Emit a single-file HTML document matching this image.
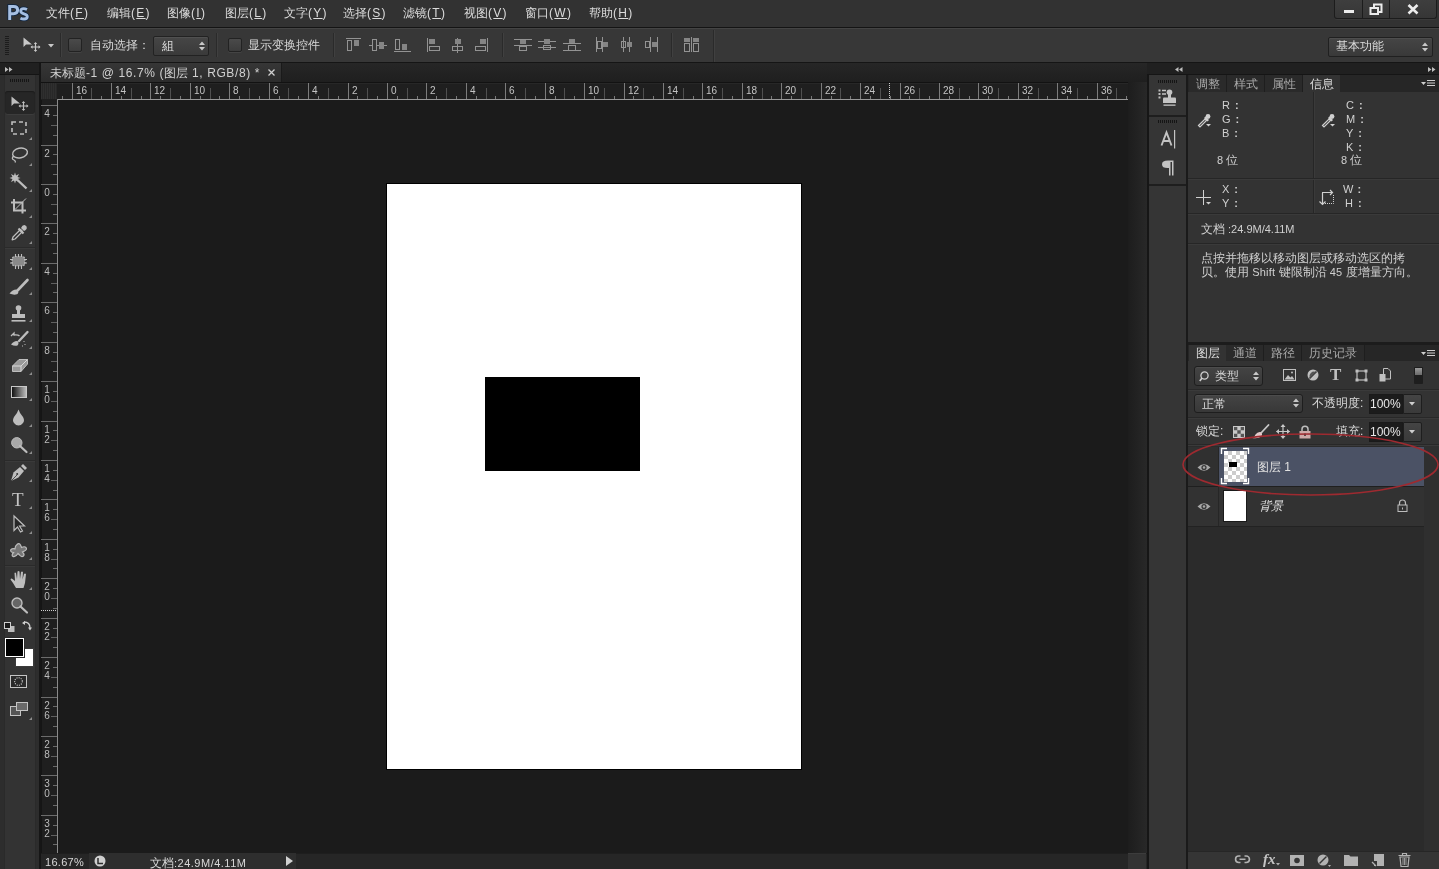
<!DOCTYPE html><html><head><meta charset="utf-8"><style>
*{margin:0;padding:0;box-sizing:border-box}
html,body{width:1439px;height:869px;overflow:hidden;background:#1b1b1b}
body{position:relative;font-family:"Liberation Sans",sans-serif;font-size:12px;color:#d6d6d6}
.t{position:absolute;white-space:nowrap;line-height:1;will-change:transform}
svg{position:absolute;overflow:visible}
u{text-decoration:underline;text-underline-offset:1px}
</style></head><body><div style="position:absolute;left:0px;top:0px;width:1439px;height:28px;background:#323232"></div>
<div style="position:absolute;left:0px;top:27px;width:1439px;height:1px;background:#141414"></div>
<svg style="left:0;top:0" width="36" height="27"><path d="M9.7 20 V6.5 H13.6 Q17.6 6.5 17.6 10.1 Q17.6 13.7 13.6 13.7 H10" fill="none" stroke="#0c2340" stroke-width="4.6"/><path d="M27 9.6 Q25.3 8.7 23.7 8.7 Q20.7 8.7 20.7 11.1 Q20.7 13 24 13.8 Q27.3 14.6 27.3 16.8 Q27.3 19 24 19 Q22 19 20.4 18.2" fill="none" stroke="#0c2340" stroke-width="4.4"/><path d="M9.7 20 V6.5 H13.6 Q17.6 6.5 17.6 10.1 Q17.6 13.7 13.6 13.7 H10" fill="none" stroke="#a6bfe2" stroke-width="3"/><path d="M27 9.6 Q25.3 8.7 23.7 8.7 Q20.7 8.7 20.7 11.1 Q20.7 13 24 13.8 Q27.3 14.6 27.3 16.8 Q27.3 19 24 19 Q22 19 20.4 18.2" fill="none" stroke="#a6bfe2" stroke-width="2.8"/></svg>
<div class="t" style="left:46px;top:7px;font-size:12px;color:#dcdcdc">文件<span style="letter-spacing:1.3px">(<u>F</u>)</span></div>
<div class="t" style="left:107px;top:7px;font-size:12px;color:#dcdcdc">编辑<span style="letter-spacing:1.3px">(<u>E</u>)</span></div>
<div class="t" style="left:167px;top:7px;font-size:12px;color:#dcdcdc">图像<span style="letter-spacing:1.3px">(<u>I</u>)</span></div>
<div class="t" style="left:225px;top:7px;font-size:12px;color:#dcdcdc">图层<span style="letter-spacing:1.3px">(<u>L</u>)</span></div>
<div class="t" style="left:284px;top:7px;font-size:12px;color:#dcdcdc">文字<span style="letter-spacing:1.3px">(<u>Y</u>)</span></div>
<div class="t" style="left:343px;top:7px;font-size:12px;color:#dcdcdc">选择<span style="letter-spacing:1.3px">(<u>S</u>)</span></div>
<div class="t" style="left:403px;top:7px;font-size:12px;color:#dcdcdc">滤镜<span style="letter-spacing:1.3px">(<u>T</u>)</span></div>
<div class="t" style="left:464px;top:7px;font-size:12px;color:#dcdcdc">视图<span style="letter-spacing:1.3px">(<u>V</u>)</span></div>
<div class="t" style="left:525px;top:7px;font-size:12px;color:#dcdcdc">窗口<span style="letter-spacing:1.3px">(<u>W</u>)</span></div>
<div class="t" style="left:589px;top:7px;font-size:12px;color:#dcdcdc">帮助<span style="letter-spacing:1.3px">(<u>H</u>)</span></div>
<div style="position:absolute;left:1334px;top:0px;width:103px;height:19px;background:linear-gradient(#3e3e3e,#363636);border:1px solid #1c1c1c;border-top:none;border-radius:0 0 3px 3px;box-shadow:0 1px 0 #3a3a3a"></div>
<div style="position:absolute;left:1362px;top:0px;width:1px;height:18px;background:#1c1c1c"></div>
<div style="position:absolute;left:1389px;top:0px;width:1px;height:18px;background:#1c1c1c"></div>
<div style="position:absolute;left:1344px;top:10px;width:10px;height:3px;background:#ececec"></div>
<svg style="left:1369px;top:3px" width="15" height="12"><rect x="5" y="1.5" width="7.5" height="7.5" fill="none" stroke="#ececec" stroke-width="2"/><rect x="1.5" y="5" width="7.5" height="6" fill="#383838" stroke="#ececec" stroke-width="2"/></svg>
<svg style="left:1407px;top:4px" width="12" height="11"><path d="M1.5 1 L10.5 9.5 M10.5 1 L1.5 9.5" stroke="#ececec" stroke-width="2.6"/></svg>
<div style="position:absolute;left:0px;top:28px;width:1439px;height:34px;background:#373737;border-top:1px solid #444"></div>
<div style="position:absolute;left:0px;top:62px;width:1439px;height:1px;background:#151515"></div>
<div style="position:absolute;left:5px;top:36px;width:4px;height:1px;background:#1c1c1c"></div>
<div style="position:absolute;left:5px;top:38px;width:4px;height:1px;background:#1c1c1c"></div>
<div style="position:absolute;left:5px;top:40px;width:4px;height:1px;background:#1c1c1c"></div>
<div style="position:absolute;left:5px;top:42px;width:4px;height:1px;background:#1c1c1c"></div>
<div style="position:absolute;left:5px;top:44px;width:4px;height:1px;background:#1c1c1c"></div>
<div style="position:absolute;left:5px;top:46px;width:4px;height:1px;background:#1c1c1c"></div>
<div style="position:absolute;left:5px;top:48px;width:4px;height:1px;background:#1c1c1c"></div>
<div style="position:absolute;left:5px;top:50px;width:4px;height:1px;background:#1c1c1c"></div>
<div style="position:absolute;left:5px;top:52px;width:4px;height:1px;background:#1c1c1c"></div>
<div style="position:absolute;left:5px;top:54px;width:4px;height:1px;background:#1c1c1c"></div>
<svg style="left:23px;top:37px" width="18" height="15" viewBox="0 0 18 15"><path d="M0.5 0.5 L0.5 10 L3 7.5 L9 7.5 Z" fill="#c8c8c8"/><path d="M12.5 6 V14 M8.5 10 H16.5" stroke="#c8c8c8" stroke-width="1.2"/><path d="M12.5 5 L10.8 7 H14.2 Z M12.5 15 L10.8 13 H14.2 Z M7.5 10 L9.5 8.3 V11.7 Z M17.5 10 L15.5 8.3 V11.7 Z" fill="#c8c8c8"/></svg>
<svg style="left:48px;top:44px" width="6" height="4"><path d="M0 0 H6 L3 3.5 Z" fill="#c8c8c8"/></svg>
<div style="position:absolute;left:60px;top:33px;width:1px;height:24px;background:#2a2a2a"></div>
<div style="position:absolute;left:61px;top:33px;width:1px;height:24px;background:#404040"></div>
<div style="position:absolute;left:68px;top:38px;width:14px;height:14px;background:linear-gradient(#4a4a4a,#3c3c3c);border:1px solid #222;border-radius:2px;box-shadow:0 1px 0 #444"></div>
<div class="t" style="left:90px;top:39px;color:#d8d8d8">自动选择：</div>
<div style="position:absolute;left:153px;top:36px;width:56px;height:20px;background:linear-gradient(#464646,#3a3a3a);border:1px solid #222;border-radius:2px;box-shadow:inset 0 1px 0 #505050"></div>
<div class="t" style="left:162px;top:40px;color:#dcdcdc">組</div>
<svg style="left:199px;top:41px" width="6" height="10"><path d="M0 4 H6 L3 0.5 Z M0 6 H6 L3 9.5 Z" fill="#c8c8c8"/></svg>
<div style="position:absolute;left:216px;top:33px;width:1px;height:24px;background:#2a2a2a"></div>
<div style="position:absolute;left:217px;top:33px;width:1px;height:24px;background:#404040"></div>
<div style="position:absolute;left:228px;top:38px;width:14px;height:14px;background:linear-gradient(#4a4a4a,#3c3c3c);border:1px solid #222;border-radius:2px;box-shadow:0 1px 0 #444"></div>
<div class="t" style="left:248px;top:39px;color:#d8d8d8">显示变换控件</div>
<div style="position:absolute;left:333px;top:33px;width:1px;height:24px;background:#2a2a2a"></div>
<div style="position:absolute;left:334px;top:33px;width:1px;height:24px;background:#404040"></div>
<svg style="left:346px;top:38px" width="16" height="14" viewBox="0 0 16 14"><path d="M0 0.5 H15" stroke="#939393"/><rect x="1.5" y="2.5" width="4" height="10" fill="none" stroke="#939393"/><rect x="8" y="2" width="5" height="6" fill="#858585"/></svg>
<svg style="left:369px;top:38px" width="18" height="14" viewBox="0 0 18 14"><path d="M0 7.5 H18" stroke="#939393"/><rect x="3.5" y="1.5" width="4" height="11" fill="#373737" stroke="#939393"/><rect x="10" y="4" width="5" height="7" fill="#858585"/></svg>
<svg style="left:394px;top:38px" width="17" height="14" viewBox="0 0 17 14"><path d="M0 13.5 H17" stroke="#939393"/><rect x="1.5" y="1.5" width="4" height="10" fill="none" stroke="#939393"/><rect x="8" y="6" width="5" height="6" fill="#858585"/></svg>
<svg style="left:427px;top:38px" width="14" height="14" viewBox="0 0 14 14"><path d="M0.5 0 V14" stroke="#939393"/><rect x="2" y="1" width="6" height="5" fill="#858585"/><rect x="2.5" y="8.5" width="10" height="4" fill="none" stroke="#939393"/></svg>
<svg style="left:451px;top:38px" width="14" height="15" viewBox="0 0 14 15"><path d="M6.5 0 V15" stroke="#939393"/><rect x="4" y="1" width="6" height="5" fill="#858585"/><rect x="1.5" y="8.5" width="10" height="4" fill="#373737" stroke="#939393"/><path d="M6.5 8 V13" stroke="#939393"/></svg>
<svg style="left:475px;top:38px" width="14" height="14" viewBox="0 0 14 14"><path d="M12.5 0 V14" stroke="#939393"/><rect x="5" y="1" width="6" height="5" fill="#858585"/><rect x="0.5" y="8.5" width="10" height="4" fill="none" stroke="#939393"/></svg>
<div style="position:absolute;left:502px;top:33px;width:1px;height:24px;background:#2a2a2a"></div>
<div style="position:absolute;left:503px;top:33px;width:1px;height:24px;background:#404040"></div>
<svg style="left:514px;top:38px" width="18" height="14" viewBox="0 0 18 14"><path d="M0 1.5 H18 M0 7.5 H18" stroke="#939393"/><rect x="6" y="2" width="6" height="4" fill="#858585"/><rect x="5.5" y="8.5" width="7" height="4" fill="none" stroke="#939393"/></svg>
<svg style="left:538px;top:38px" width="18" height="14" viewBox="0 0 18 14"><path d="M0 3.5 H18 M0 9.5 H18" stroke="#939393"/><rect x="6" y="1" width="6" height="5" fill="#858585"/><rect x="5.5" y="7.5" width="7" height="4" fill="none" stroke="#939393"/></svg>
<svg style="left:563px;top:38px" width="18" height="14" viewBox="0 0 18 14"><path d="M0 5.5 H18 M0 12.5 H18" stroke="#939393"/><rect x="6" y="1" width="6" height="4" fill="#858585"/><rect x="5.5" y="7.5" width="7" height="5" fill="none" stroke="#939393"/></svg>
<svg style="left:596px;top:37px" width="14" height="15" viewBox="0 0 14 15"><path d="M0.5 0 V15 M6.5 0 V15" stroke="#939393"/><rect x="1.5" y="4.5" width="4" height="7" fill="none" stroke="#939393"/><rect x="7" y="5" width="5" height="5" fill="#858585"/></svg>
<svg style="left:620px;top:37px" width="14" height="15" viewBox="0 0 14 15"><path d="M3.5 0 V15 M9.5 0 V15" stroke="#939393"/><rect x="1.5" y="4.5" width="4" height="6" fill="none" stroke="#939393"/><rect x="7" y="5" width="5" height="5" fill="#858585"/></svg>
<svg style="left:645px;top:37px" width="14" height="15" viewBox="0 0 14 15"><path d="M5.5 0 V15 M12.5 0 V15" stroke="#939393"/><rect x="0.5" y="4.5" width="4" height="6" fill="none" stroke="#939393"/><rect x="7" y="5" width="5" height="5" fill="#858585"/></svg>
<div style="position:absolute;left:671px;top:33px;width:1px;height:24px;background:#2a2a2a"></div>
<div style="position:absolute;left:672px;top:33px;width:1px;height:24px;background:#404040"></div>
<svg style="left:683px;top:37px" width="17" height="15" viewBox="0 0 17 15"><path d="M8.5 0 V15" stroke="#939393"/><rect x="1" y="1" width="6" height="4" fill="#858585"/><rect x="1.5" y="6.5" width="5" height="8" fill="none" stroke="#939393"/><rect x="10" y="1" width="6" height="4" fill="#858585"/><rect x="10.5" y="6.5" width="5" height="8" fill="none" stroke="#939393"/></svg>
<div style="position:absolute;left:713px;top:30px;width:1px;height:32px;background:#2a2a2a"></div>
<div style="position:absolute;left:714px;top:30px;width:1px;height:32px;background:#404040"></div>
<div style="position:absolute;left:1328px;top:37px;width:105px;height:20px;background:linear-gradient(#454545,#393939);border:1px solid #202020;border-radius:2px;box-shadow:inset 0 1px 0 #4e4e4e"></div>
<div class="t" style="left:1336px;top:40px;color:#dcdcdc">基本功能</div>
<svg style="left:1422px;top:42px" width="6" height="10"><path d="M0 4 H6 L3 0.5 Z M0 6 H6 L3 9.5 Z" fill="#c8c8c8"/></svg>
<div style="position:absolute;left:0px;top:63px;width:39px;height:806px;background:#2d2d2d"></div>
<div style="position:absolute;left:39px;top:63px;width:2px;height:806px;background:#161616"></div>
<div style="position:absolute;left:0px;top:63px;width:39px;height:12px;background:#202020;border-bottom:1px solid #141414"></div>
<svg style="left:5px;top:67px" width="8" height="5" viewBox="0 0 8 5"><path d="M0 0 L3.5 2.5 L0 5 Z M4 0 L7.5 2.5 L4 5 Z" fill="#bdbdbd"/></svg>
<div style="position:absolute;left:4px;top:75px;width:32px;height:794px;background:#333333;border-left:1px solid #2a2a2a;border-right:1px solid #2a2a2a"></div>
<div style="position:absolute;left:10px;top:79px;width:1px;height:3px;background:#151515"></div>
<div style="position:absolute;left:12px;top:79px;width:1px;height:3px;background:#151515"></div>
<div style="position:absolute;left:14px;top:79px;width:1px;height:3px;background:#151515"></div>
<div style="position:absolute;left:16px;top:79px;width:1px;height:3px;background:#151515"></div>
<div style="position:absolute;left:18px;top:79px;width:1px;height:3px;background:#151515"></div>
<div style="position:absolute;left:20px;top:79px;width:1px;height:3px;background:#151515"></div>
<div style="position:absolute;left:22px;top:79px;width:1px;height:3px;background:#151515"></div>
<div style="position:absolute;left:24px;top:79px;width:1px;height:3px;background:#151515"></div>
<div style="position:absolute;left:26px;top:79px;width:1px;height:3px;background:#151515"></div>
<div style="position:absolute;left:28px;top:79px;width:1px;height:3px;background:#151515"></div>
<div style="position:absolute;left:5px;top:91px;width:30px;height:23px;background:#262626;border-radius:3px;box-shadow:inset 0 1px 1px #1c1c1c, 0 1px 0 #3c3c3c"></div>
<svg style="left:11px;top:96px" width="18" height="15" viewBox="0 0 18 15"><path d="M0.5 0.5 L0.5 10 L3 7.5 L9 7.5 Z" fill="#bdbdbd"/><path d="M12.5 6 V14 M8.5 10 H16.5" stroke="#bdbdbd" stroke-width="1.2"/><path d="M12.5 5 L10.8 7 H14.2 Z M12.5 15 L10.8 13 H14.2 Z M7.5 10 L9.5 8.3 V11.7 Z M17.5 10 L15.5 8.3 V11.7 Z" fill="#bdbdbd"/></svg>
<svg style="left:11px;top:121px" width="16" height="14" viewBox="0 0 16 14"><rect x="1" y="1" width="14" height="12" fill="none" stroke="#bdbdbd" stroke-width="1.6" stroke-dasharray="4 3"/></svg>
<svg style="left:29px;top:137px" width="3" height="3" viewBox="0 0 3 3"><path d="M3 0 V3 H0 Z" fill="#8e8e8e"/></svg>
<svg style="left:10px;top:147px" width="18" height="16" viewBox="0 0 18 16"><ellipse cx="10" cy="6" rx="7.5" ry="4.8" fill="none" stroke="#bdbdbd" stroke-width="1.4" transform="rotate(-12 10 6)"/><path d="M3.5 9 Q1 12 4 13 Q6 14 5 15.5" fill="none" stroke="#bdbdbd" stroke-width="1.3"/></svg>
<svg style="left:29px;top:163px" width="3" height="3" viewBox="0 0 3 3"><path d="M3 0 V3 H0 Z" fill="#8e8e8e"/></svg>
<svg style="left:10px;top:172px" width="18" height="18" viewBox="0 0 18 18"><path d="M5 0.5 L6 3.5 L9 2 L7.5 5 L10.5 6 L7.5 7 L9 10 L6 8.5 L5 11.5 L4 8.5 L1 10 L2.5 7 L-0.5 6 L2.5 5 L1 2 L4 3.5 Z" fill="#bdbdbd"/><path d="M7 7.5 L16.5 16.5" stroke="#bdbdbd" stroke-width="2.4"/></svg>
<svg style="left:29px;top:189px" width="3" height="3" viewBox="0 0 3 3"><path d="M3 0 V3 H0 Z" fill="#8e8e8e"/></svg>
<svg style="left:10px;top:198px" width="17" height="16" viewBox="0 0 17 16"><path d="M4 1 V12.5 H16 M1 4.5 H12.5 V15.5" fill="none" stroke="#bdbdbd" stroke-width="2"/><path d="M5 11.5 L16 0.5" stroke="#bdbdbd" stroke-width="1"/></svg>
<svg style="left:29px;top:215px" width="3" height="3" viewBox="0 0 3 3"><path d="M3 0 V3 H0 Z" fill="#8e8e8e"/></svg>
<svg style="left:11px;top:224px" width="17" height="17" viewBox="0 0 17 17"><path d="M1.2 15.8 L2 13 L9.5 5.5 L11.5 7.5 L4 15 Z" fill="#2a2a2a" stroke="#bdbdbd" stroke-width="1.3" stroke-linejoin="round"/><path d="M7.5 4.5 L12.5 9.5" stroke="#bdbdbd" stroke-width="2.2"/><path d="M10 4 Q11.5 0.5 14 1.2 Q16.5 2.5 15.5 5 Q14.5 6.5 13 7 Z" fill="#bdbdbd"/></svg>
<svg style="left:29px;top:241px" width="3" height="3" viewBox="0 0 3 3"><path d="M3 0 V3 H0 Z" fill="#8e8e8e"/></svg>
<div style="position:absolute;left:5px;top:247px;width:30px;height:1px;background:#2a2a2a"></div>
<div style="position:absolute;left:5px;top:248px;width:30px;height:1px;background:#3a3a3a"></div>
<svg style="left:10px;top:254px" width="18" height="15" viewBox="0 0 18 15"><rect x="2" y="2.5" width="13" height="9.5" rx="3" fill="#8a8a8a" stroke="#bdbdbd" stroke-width="1.1" stroke-dasharray="1.6 1.2"/><path d="M5.5 0 V3 M8.5 0 V3 M11.5 0 V3 M5.5 11.5 V15 M8.5 11.5 V15 M11.5 11.5 V15 M0 5.5 H3 M0 9 H3 M14 5.5 H17 M14 9 H17" stroke="#bdbdbd" stroke-width="1.1"/></svg>
<svg style="left:29px;top:267px" width="3" height="3" viewBox="0 0 3 3"><path d="M3 0 V3 H0 Z" fill="#8e8e8e"/></svg>
<svg style="left:9px;top:279px" width="20" height="17" viewBox="0 0 20 17"><path d="M18.5 1 L9 11" stroke="#bdbdbd" stroke-width="2.6" stroke-linecap="round"/><path d="M0.5 14.5 Q4 10 8 10.5 Q10.5 12.5 8.5 15 Q5 16.5 0.5 14.5 Z" fill="#bdbdbd"/></svg>
<svg style="left:29px;top:292px" width="3" height="3" viewBox="0 0 3 3"><path d="M3 0 V3 H0 Z" fill="#8e8e8e"/></svg>
<svg style="left:11px;top:305px" width="15" height="18" viewBox="0 0 15 18"><circle cx="7.5" cy="3" r="2.8" fill="#bdbdbd"/><rect x="6" y="3" width="3" height="6" fill="#bdbdbd"/><rect x="1" y="9" width="13" height="4" fill="#bdbdbd"/><rect x="0.5" y="15" width="14" height="1.6" fill="#bdbdbd"/></svg>
<svg style="left:29px;top:319px" width="3" height="3" viewBox="0 0 3 3"><path d="M3 0 V3 H0 Z" fill="#8e8e8e"/></svg>
<svg style="left:10px;top:331px" width="19" height="16" viewBox="0 0 19 16"><path d="M17.5 1 L9 10" stroke="#bdbdbd" stroke-width="2.4" stroke-linecap="round"/><path d="M1 13.5 Q4 9.5 7.5 10 Q9.5 12 7.5 14.5 Q4.5 15.5 1 13.5 Z" fill="#bdbdbd"/><path d="M1 5 L4 2 V4 Q8 3.5 9.5 5" fill="none" stroke="#bdbdbd" stroke-width="1.3"/><path d="M14 10 V11 M15 13 V14 M12.5 14.5 V15.5" stroke="#bdbdbd" stroke-width="1"/></svg>
<svg style="left:29px;top:346px" width="3" height="3" viewBox="0 0 3 3"><path d="M3 0 V3 H0 Z" fill="#8e8e8e"/></svg>
<svg style="left:12px;top:358px" width="16" height="15" viewBox="0 0 16 15"><path d="M0.5 8 L7 1.5 H15.5 L15.5 6 L9 13.5 H0.5 Z" fill="#9a9a9a" stroke="#bdbdbd" stroke-width="1"/><path d="M0.5 8 H9 V13.5 M9 8 L15.5 1.5" fill="none" stroke="#dadada" stroke-width="1"/></svg>
<svg style="left:29px;top:372px" width="3" height="3" viewBox="0 0 3 3"><path d="M3 0 V3 H0 Z" fill="#8e8e8e"/></svg>
<div style="position:absolute;left:11px;top:386px;width:16px;height:12px;border:1.5px solid #c8c8c8;background:linear-gradient(90deg,#111,#bbb)"></div>
<svg style="left:29px;top:398px" width="3" height="3" viewBox="0 0 3 3"><path d="M3 0 V3 H0 Z" fill="#8e8e8e"/></svg>
<svg style="left:12px;top:409px" width="13" height="17" viewBox="0 0 13 17"><path d="M6.5 0.5 Q7.5 4 11 8 Q13 11.5 11 14 Q9 16.5 6.5 16.5 Q4 16.5 2 14 Q0 11.5 2 8 Q5.5 4 6.5 0.5 Z" fill="#bdbdbd"/></svg>
<svg style="left:29px;top:424px" width="3" height="3" viewBox="0 0 3 3"><path d="M3 0 V3 H0 Z" fill="#8e8e8e"/></svg>
<svg style="left:11px;top:437px" width="17" height="16" viewBox="0 0 17 16"><circle cx="5.8" cy="5.8" r="5.2" fill="#a8a8a8" stroke="#bdbdbd"/><path d="M9 9 L15.5 15" stroke="#bdbdbd" stroke-width="2.2" stroke-linecap="round"/></svg>
<svg style="left:29px;top:451px" width="3" height="3" viewBox="0 0 3 3"><path d="M3 0 V3 H0 Z" fill="#8e8e8e"/></svg>
<div style="position:absolute;left:5px;top:460px;width:30px;height:1px;background:#2a2a2a"></div>
<div style="position:absolute;left:5px;top:461px;width:30px;height:1px;background:#3a3a3a"></div>
<svg style="left:10px;top:463px" width="18" height="19" viewBox="0 0 18 19"><path d="M1 18 L3.5 9.5 L10 4 L14 8 L8.5 14.5 Z" fill="#bdbdbd"/><path d="M11 3 L13 1 L17 5 L15 7 Z" fill="#bdbdbd"/><circle cx="7.2" cy="11" r="1" fill="#333"/><path d="M1 18 L7 12" stroke="#333" stroke-width="0.8"/></svg>
<svg style="left:29px;top:479px" width="3" height="3" viewBox="0 0 3 3"><path d="M3 0 V3 H0 Z" fill="#8e8e8e"/></svg>
<div class="t" style="left:12px;top:490px;font-family:Liberation Serif,serif;font-size:19px;color:#c4c4c4">T</div>
<svg style="left:29px;top:506px" width="3" height="3" viewBox="0 0 3 3"><path d="M3 0 V3 H0 Z" fill="#8e8e8e"/></svg>
<svg style="left:13px;top:515px" width="13" height="18" viewBox="0 0 13 18"><path d="M1 1 V15.5 L4.5 12 L7.5 17 L9.5 16 L6.5 11 H11.5 Z" fill="#262626" stroke="#bdbdbd" stroke-width="1.2"/></svg>
<svg style="left:29px;top:531px" width="3" height="3" viewBox="0 0 3 3"><path d="M3 0 V3 H0 Z" fill="#8e8e8e"/></svg>
<svg style="left:10px;top:543px" width="18" height="15" viewBox="0 0 18 15"><path d="M7 1.5 Q9 -0.5 10.5 2 L11.5 4.5 Q14.5 3 16 4.5 Q17.5 6.5 14.5 8 L12.5 9 Q15 11.5 13.5 13 Q11.5 14.5 9.5 12 L8 10.5 Q5.5 14.5 3 13.5 Q1 12.5 3.5 9.5 Q0 9 0.8 6.8 Q1.5 5 5 5.8 Q5 3 7 1.5 Z" fill="#777" stroke="#bdbdbd" stroke-width="1.2"/></svg>
<svg style="left:29px;top:557px" width="3" height="3" viewBox="0 0 3 3"><path d="M3 0 V3 H0 Z" fill="#8e8e8e"/></svg>
<div style="position:absolute;left:5px;top:565px;width:30px;height:1px;background:#2a2a2a"></div>
<div style="position:absolute;left:5px;top:566px;width:30px;height:1px;background:#3a3a3a"></div>
<svg style="left:10px;top:571px" width="18" height="18" viewBox="0 0 18 18"><path d="M6 17 L3 12 L0.5 8.5 Q1 7 2.5 8 L5 10 L4.5 2 Q5 0.8 6 2 L7 8 L7.5 0.5 Q8.5 -0.5 9.5 0.5 L10 8 L11 1 Q12 0 13 1 L12.5 8.5 L14 3 Q15 2 16 3 L15 12 L13.5 17 Z" fill="#bdbdbd"/></svg>
<svg style="left:29px;top:587px" width="3" height="3" viewBox="0 0 3 3"><path d="M3 0 V3 H0 Z" fill="#8e8e8e"/></svg>
<svg style="left:11px;top:597px" width="18" height="17" viewBox="0 0 18 17"><circle cx="6" cy="6" r="5" fill="#666" stroke="#bdbdbd" stroke-width="1.4"/><path d="M9.5 9.5 L16 15.5" stroke="#bdbdbd" stroke-width="2.2" stroke-linecap="round"/></svg>
<svg style="left:4px;top:622px" width="11" height="10" viewBox="0 0 11 10"><rect x="0.5" y="0.5" width="6" height="6" fill="#1a1a1a" stroke="#cfcfcf"/><rect x="4" y="4" width="6.5" height="6" fill="#bdbdbd"/><rect x="0.5" y="0.5" width="6" height="6" fill="#1a1a1a" stroke="#cfcfcf"/></svg>
<svg style="left:22px;top:621px" width="10" height="11" viewBox="0 0 10 11"><path d="M2 1 Q8 1 8 7" fill="none" stroke="#cfcfcf" stroke-width="1.3"/><path d="M0 2 L3 0 V4 Z M6 6.5 H10 L8 9.5 Z" fill="#cfcfcf"/></svg>
<div style="position:absolute;left:15px;top:648px;width:19px;height:19px;background:#fff;border:1px solid #3a3a3a"></div>
<div style="position:absolute;left:5px;top:638px;width:19px;height:19px;background:#000;border:1px solid #fff;outline:1px solid #2a2a2a"></div>
<svg style="left:10px;top:675px" width="18" height="14" viewBox="0 0 18 14"><rect x="0.5" y="0.5" width="16" height="12" fill="#2a2a2a" stroke="#c4c4c4"/><circle cx="8.5" cy="6.5" r="3.8" fill="none" stroke="#d8d8d8" stroke-width="1.1" stroke-dasharray="1 1.2"/></svg>
<svg style="left:10px;top:702px" width="18" height="14" viewBox="0 0 18 14"><rect x="6.5" y="0.5" width="11" height="8" fill="#777" stroke="#c4c4c4"/><rect x="0.5" y="4.5" width="10" height="9" fill="#555" stroke="#c4c4c4"/><rect x="6.5" y="0.5" width="11" height="8" fill="#6a6a6a" stroke="#c4c4c4"/></svg>
<svg style="left:29px;top:717px" width="3" height="3" viewBox="0 0 3 3"><path d="M3 0 V3 H0 Z" fill="#8e8e8e"/></svg>
<div style="position:absolute;left:41px;top:63px;width:1106px;height:19px;background:linear-gradient(#262626,#1f1f1f)"></div>
<div style="position:absolute;left:41px;top:63px;width:241px;height:19px;background:linear-gradient(#363636,#2c2c2c);border-right:1px solid #1a1a1a"></div>
<div class="t" style="left:50px;top:67px;font-size:12px;color:#d0d0d0">未标题<span style="font-size:12px;letter-spacing:0.6px">-1 @ 16.7% (</span>图层<span style="font-size:12px;letter-spacing:0.6px"> 1, RGB/8) *</span></div>
<svg style="left:268px;top:69px" width="7" height="7" viewBox="0 0 7 7"><path d="M0.5 0.5 L6.5 6.5 M6.5 0.5 L0.5 6.5" stroke="#cfcfcf" stroke-width="1.3"/></svg>
<div style="position:absolute;left:41px;top:82px;width:1087px;height:18px;background:#1f1f1f;border-top:1px solid #121212;box-shadow:inset 0 1px 0 #272727"></div>
<div style="position:absolute;left:41px;top:100px;width:16px;height:753px;background:#1f1f1f;border-left:1px solid #151515"></div>
<div style="position:absolute;left:41px;top:83px;width:16px;height:16px;background:#2a2a2a;background-image:repeating-linear-gradient(90deg,#2f2f2f 0 1px,#282828 1px 2px)"></div>
<div style="position:absolute;left:57px;top:99px;width:1071px;height:1px;background:#999"></div>
<div style="position:absolute;left:57px;top:99px;width:1px;height:754px;background:#8a8a8a"></div>
<div style="position:absolute;left:62px;top:96px;width:1px;height:3px;background:#7a7a7a"></div>
<div style="position:absolute;left:72px;top:83px;width:1px;height:16px;background:#7c7c7c"></div>
<div class="t" style="left:76px;top:86px;font-size:10px;color:#c4c4c4;font-family:'Liberation Sans',sans-serif">16</div>
<div style="position:absolute;left:81px;top:96px;width:1px;height:3px;background:#7a7a7a"></div>
<div style="position:absolute;left:91px;top:88px;width:1px;height:11px;background:#505050"></div>
<div style="position:absolute;left:101px;top:96px;width:1px;height:3px;background:#7a7a7a"></div>
<div style="position:absolute;left:111px;top:83px;width:1px;height:16px;background:#7c7c7c"></div>
<div class="t" style="left:115px;top:86px;font-size:10px;color:#c4c4c4;font-family:'Liberation Sans',sans-serif">14</div>
<div style="position:absolute;left:121px;top:96px;width:1px;height:3px;background:#7a7a7a"></div>
<div style="position:absolute;left:131px;top:88px;width:1px;height:11px;background:#505050"></div>
<div style="position:absolute;left:141px;top:96px;width:1px;height:3px;background:#7a7a7a"></div>
<div style="position:absolute;left:150px;top:83px;width:1px;height:16px;background:#7c7c7c"></div>
<div class="t" style="left:154px;top:86px;font-size:10px;color:#c4c4c4;font-family:'Liberation Sans',sans-serif">12</div>
<div style="position:absolute;left:160px;top:96px;width:1px;height:3px;background:#7a7a7a"></div>
<div style="position:absolute;left:170px;top:88px;width:1px;height:11px;background:#505050"></div>
<div style="position:absolute;left:180px;top:96px;width:1px;height:3px;background:#7a7a7a"></div>
<div style="position:absolute;left:190px;top:83px;width:1px;height:16px;background:#7c7c7c"></div>
<div class="t" style="left:194px;top:86px;font-size:10px;color:#c4c4c4;font-family:'Liberation Sans',sans-serif">10</div>
<div style="position:absolute;left:200px;top:96px;width:1px;height:3px;background:#7a7a7a"></div>
<div style="position:absolute;left:210px;top:88px;width:1px;height:11px;background:#505050"></div>
<div style="position:absolute;left:219px;top:96px;width:1px;height:3px;background:#7a7a7a"></div>
<div style="position:absolute;left:229px;top:83px;width:1px;height:16px;background:#7c7c7c"></div>
<div class="t" style="left:233px;top:86px;font-size:10px;color:#c4c4c4;font-family:'Liberation Sans',sans-serif">8</div>
<div style="position:absolute;left:239px;top:96px;width:1px;height:3px;background:#7a7a7a"></div>
<div style="position:absolute;left:249px;top:88px;width:1px;height:11px;background:#505050"></div>
<div style="position:absolute;left:259px;top:96px;width:1px;height:3px;background:#7a7a7a"></div>
<div style="position:absolute;left:269px;top:83px;width:1px;height:16px;background:#7c7c7c"></div>
<div class="t" style="left:273px;top:86px;font-size:10px;color:#c4c4c4;font-family:'Liberation Sans',sans-serif">6</div>
<div style="position:absolute;left:279px;top:96px;width:1px;height:3px;background:#7a7a7a"></div>
<div style="position:absolute;left:288px;top:88px;width:1px;height:11px;background:#505050"></div>
<div style="position:absolute;left:298px;top:96px;width:1px;height:3px;background:#7a7a7a"></div>
<div style="position:absolute;left:308px;top:83px;width:1px;height:16px;background:#7c7c7c"></div>
<div class="t" style="left:312px;top:86px;font-size:10px;color:#c4c4c4;font-family:'Liberation Sans',sans-serif">4</div>
<div style="position:absolute;left:318px;top:96px;width:1px;height:3px;background:#7a7a7a"></div>
<div style="position:absolute;left:328px;top:88px;width:1px;height:11px;background:#505050"></div>
<div style="position:absolute;left:338px;top:96px;width:1px;height:3px;background:#7a7a7a"></div>
<div style="position:absolute;left:348px;top:83px;width:1px;height:16px;background:#7c7c7c"></div>
<div class="t" style="left:352px;top:86px;font-size:10px;color:#c4c4c4;font-family:'Liberation Sans',sans-serif">2</div>
<div style="position:absolute;left:357px;top:96px;width:1px;height:3px;background:#7a7a7a"></div>
<div style="position:absolute;left:367px;top:88px;width:1px;height:11px;background:#505050"></div>
<div style="position:absolute;left:377px;top:96px;width:1px;height:3px;background:#7a7a7a"></div>
<div style="position:absolute;left:387px;top:83px;width:1px;height:16px;background:#7c7c7c"></div>
<div class="t" style="left:391px;top:86px;font-size:10px;color:#c4c4c4;font-family:'Liberation Sans',sans-serif">0</div>
<div style="position:absolute;left:397px;top:96px;width:1px;height:3px;background:#7a7a7a"></div>
<div style="position:absolute;left:407px;top:88px;width:1px;height:11px;background:#505050"></div>
<div style="position:absolute;left:417px;top:96px;width:1px;height:3px;background:#7a7a7a"></div>
<div style="position:absolute;left:426px;top:83px;width:1px;height:16px;background:#7c7c7c"></div>
<div class="t" style="left:430px;top:86px;font-size:10px;color:#c4c4c4;font-family:'Liberation Sans',sans-serif">2</div>
<div style="position:absolute;left:436px;top:96px;width:1px;height:3px;background:#7a7a7a"></div>
<div style="position:absolute;left:446px;top:88px;width:1px;height:11px;background:#505050"></div>
<div style="position:absolute;left:456px;top:96px;width:1px;height:3px;background:#7a7a7a"></div>
<div style="position:absolute;left:466px;top:83px;width:1px;height:16px;background:#7c7c7c"></div>
<div class="t" style="left:470px;top:86px;font-size:10px;color:#c4c4c4;font-family:'Liberation Sans',sans-serif">4</div>
<div style="position:absolute;left:476px;top:96px;width:1px;height:3px;background:#7a7a7a"></div>
<div style="position:absolute;left:486px;top:88px;width:1px;height:11px;background:#505050"></div>
<div style="position:absolute;left:495px;top:96px;width:1px;height:3px;background:#7a7a7a"></div>
<div style="position:absolute;left:505px;top:83px;width:1px;height:16px;background:#7c7c7c"></div>
<div class="t" style="left:509px;top:86px;font-size:10px;color:#c4c4c4;font-family:'Liberation Sans',sans-serif">6</div>
<div style="position:absolute;left:515px;top:96px;width:1px;height:3px;background:#7a7a7a"></div>
<div style="position:absolute;left:525px;top:88px;width:1px;height:11px;background:#505050"></div>
<div style="position:absolute;left:535px;top:96px;width:1px;height:3px;background:#7a7a7a"></div>
<div style="position:absolute;left:545px;top:83px;width:1px;height:16px;background:#7c7c7c"></div>
<div class="t" style="left:549px;top:86px;font-size:10px;color:#c4c4c4;font-family:'Liberation Sans',sans-serif">8</div>
<div style="position:absolute;left:555px;top:96px;width:1px;height:3px;background:#7a7a7a"></div>
<div style="position:absolute;left:564px;top:88px;width:1px;height:11px;background:#505050"></div>
<div style="position:absolute;left:574px;top:96px;width:1px;height:3px;background:#7a7a7a"></div>
<div style="position:absolute;left:584px;top:83px;width:1px;height:16px;background:#7c7c7c"></div>
<div class="t" style="left:588px;top:86px;font-size:10px;color:#c4c4c4;font-family:'Liberation Sans',sans-serif">10</div>
<div style="position:absolute;left:594px;top:96px;width:1px;height:3px;background:#7a7a7a"></div>
<div style="position:absolute;left:604px;top:88px;width:1px;height:11px;background:#505050"></div>
<div style="position:absolute;left:614px;top:96px;width:1px;height:3px;background:#7a7a7a"></div>
<div style="position:absolute;left:624px;top:83px;width:1px;height:16px;background:#7c7c7c"></div>
<div class="t" style="left:628px;top:86px;font-size:10px;color:#c4c4c4;font-family:'Liberation Sans',sans-serif">12</div>
<div style="position:absolute;left:633px;top:96px;width:1px;height:3px;background:#7a7a7a"></div>
<div style="position:absolute;left:643px;top:88px;width:1px;height:11px;background:#505050"></div>
<div style="position:absolute;left:653px;top:96px;width:1px;height:3px;background:#7a7a7a"></div>
<div style="position:absolute;left:663px;top:83px;width:1px;height:16px;background:#7c7c7c"></div>
<div class="t" style="left:667px;top:86px;font-size:10px;color:#c4c4c4;font-family:'Liberation Sans',sans-serif">14</div>
<div style="position:absolute;left:673px;top:96px;width:1px;height:3px;background:#7a7a7a"></div>
<div style="position:absolute;left:683px;top:88px;width:1px;height:11px;background:#505050"></div>
<div style="position:absolute;left:693px;top:96px;width:1px;height:3px;background:#7a7a7a"></div>
<div style="position:absolute;left:702px;top:83px;width:1px;height:16px;background:#7c7c7c"></div>
<div class="t" style="left:706px;top:86px;font-size:10px;color:#c4c4c4;font-family:'Liberation Sans',sans-serif">16</div>
<div style="position:absolute;left:712px;top:96px;width:1px;height:3px;background:#7a7a7a"></div>
<div style="position:absolute;left:722px;top:88px;width:1px;height:11px;background:#505050"></div>
<div style="position:absolute;left:732px;top:96px;width:1px;height:3px;background:#7a7a7a"></div>
<div style="position:absolute;left:742px;top:83px;width:1px;height:16px;background:#7c7c7c"></div>
<div class="t" style="left:746px;top:86px;font-size:10px;color:#c4c4c4;font-family:'Liberation Sans',sans-serif">18</div>
<div style="position:absolute;left:752px;top:96px;width:1px;height:3px;background:#7a7a7a"></div>
<div style="position:absolute;left:762px;top:88px;width:1px;height:11px;background:#505050"></div>
<div style="position:absolute;left:771px;top:96px;width:1px;height:3px;background:#7a7a7a"></div>
<div style="position:absolute;left:781px;top:83px;width:1px;height:16px;background:#7c7c7c"></div>
<div class="t" style="left:785px;top:86px;font-size:10px;color:#c4c4c4;font-family:'Liberation Sans',sans-serif">20</div>
<div style="position:absolute;left:791px;top:96px;width:1px;height:3px;background:#7a7a7a"></div>
<div style="position:absolute;left:801px;top:88px;width:1px;height:11px;background:#505050"></div>
<div style="position:absolute;left:811px;top:96px;width:1px;height:3px;background:#7a7a7a"></div>
<div style="position:absolute;left:821px;top:83px;width:1px;height:16px;background:#7c7c7c"></div>
<div class="t" style="left:825px;top:86px;font-size:10px;color:#c4c4c4;font-family:'Liberation Sans',sans-serif">22</div>
<div style="position:absolute;left:831px;top:96px;width:1px;height:3px;background:#7a7a7a"></div>
<div style="position:absolute;left:840px;top:88px;width:1px;height:11px;background:#505050"></div>
<div style="position:absolute;left:850px;top:96px;width:1px;height:3px;background:#7a7a7a"></div>
<div style="position:absolute;left:860px;top:83px;width:1px;height:16px;background:#7c7c7c"></div>
<div class="t" style="left:864px;top:86px;font-size:10px;color:#c4c4c4;font-family:'Liberation Sans',sans-serif">24</div>
<div style="position:absolute;left:870px;top:96px;width:1px;height:3px;background:#7a7a7a"></div>
<div style="position:absolute;left:880px;top:88px;width:1px;height:11px;background:#505050"></div>
<div style="position:absolute;left:890px;top:96px;width:1px;height:3px;background:#7a7a7a"></div>
<div style="position:absolute;left:900px;top:83px;width:1px;height:16px;background:#7c7c7c"></div>
<div class="t" style="left:904px;top:86px;font-size:10px;color:#c4c4c4;font-family:'Liberation Sans',sans-serif">26</div>
<div style="position:absolute;left:909px;top:96px;width:1px;height:3px;background:#7a7a7a"></div>
<div style="position:absolute;left:919px;top:88px;width:1px;height:11px;background:#505050"></div>
<div style="position:absolute;left:929px;top:96px;width:1px;height:3px;background:#7a7a7a"></div>
<div style="position:absolute;left:939px;top:83px;width:1px;height:16px;background:#7c7c7c"></div>
<div class="t" style="left:943px;top:86px;font-size:10px;color:#c4c4c4;font-family:'Liberation Sans',sans-serif">28</div>
<div style="position:absolute;left:949px;top:96px;width:1px;height:3px;background:#7a7a7a"></div>
<div style="position:absolute;left:959px;top:88px;width:1px;height:11px;background:#505050"></div>
<div style="position:absolute;left:969px;top:96px;width:1px;height:3px;background:#7a7a7a"></div>
<div style="position:absolute;left:978px;top:83px;width:1px;height:16px;background:#7c7c7c"></div>
<div class="t" style="left:982px;top:86px;font-size:10px;color:#c4c4c4;font-family:'Liberation Sans',sans-serif">30</div>
<div style="position:absolute;left:988px;top:96px;width:1px;height:3px;background:#7a7a7a"></div>
<div style="position:absolute;left:998px;top:88px;width:1px;height:11px;background:#505050"></div>
<div style="position:absolute;left:1008px;top:96px;width:1px;height:3px;background:#7a7a7a"></div>
<div style="position:absolute;left:1018px;top:83px;width:1px;height:16px;background:#7c7c7c"></div>
<div class="t" style="left:1022px;top:86px;font-size:10px;color:#c4c4c4;font-family:'Liberation Sans',sans-serif">32</div>
<div style="position:absolute;left:1028px;top:96px;width:1px;height:3px;background:#7a7a7a"></div>
<div style="position:absolute;left:1038px;top:88px;width:1px;height:11px;background:#505050"></div>
<div style="position:absolute;left:1047px;top:96px;width:1px;height:3px;background:#7a7a7a"></div>
<div style="position:absolute;left:1057px;top:83px;width:1px;height:16px;background:#7c7c7c"></div>
<div class="t" style="left:1061px;top:86px;font-size:10px;color:#c4c4c4;font-family:'Liberation Sans',sans-serif">34</div>
<div style="position:absolute;left:1067px;top:96px;width:1px;height:3px;background:#7a7a7a"></div>
<div style="position:absolute;left:1077px;top:88px;width:1px;height:11px;background:#505050"></div>
<div style="position:absolute;left:1087px;top:96px;width:1px;height:3px;background:#7a7a7a"></div>
<div style="position:absolute;left:1097px;top:83px;width:1px;height:16px;background:#7c7c7c"></div>
<div class="t" style="left:1101px;top:86px;font-size:10px;color:#c4c4c4;font-family:'Liberation Sans',sans-serif">36</div>
<div style="position:absolute;left:1107px;top:96px;width:1px;height:3px;background:#7a7a7a"></div>
<div style="position:absolute;left:1116px;top:88px;width:1px;height:11px;background:#505050"></div>
<div style="position:absolute;left:1126px;top:96px;width:1px;height:3px;background:#7a7a7a"></div>
<div style="position:absolute;left:41px;top:105px;width:16px;height:1px;background:#6c6c6c"></div>
<div class="t" style="left:42px;top:109px;font-size:10px;line-height:10px;color:#bcbcbc;text-align:center;width:10px">4</div>
<div style="position:absolute;left:53px;top:115px;width:4px;height:1px;background:#6a6a6a"></div>
<div style="position:absolute;left:51px;top:125px;width:6px;height:1px;background:#606060"></div>
<div style="position:absolute;left:53px;top:135px;width:4px;height:1px;background:#6a6a6a"></div>
<div style="position:absolute;left:41px;top:145px;width:16px;height:1px;background:#6c6c6c"></div>
<div class="t" style="left:42px;top:149px;font-size:10px;line-height:10px;color:#bcbcbc;text-align:center;width:10px">2</div>
<div style="position:absolute;left:53px;top:154px;width:4px;height:1px;background:#6a6a6a"></div>
<div style="position:absolute;left:51px;top:164px;width:6px;height:1px;background:#606060"></div>
<div style="position:absolute;left:53px;top:174px;width:4px;height:1px;background:#6a6a6a"></div>
<div style="position:absolute;left:41px;top:184px;width:16px;height:1px;background:#6c6c6c"></div>
<div class="t" style="left:42px;top:188px;font-size:10px;line-height:10px;color:#bcbcbc;text-align:center;width:10px">0</div>
<div style="position:absolute;left:53px;top:194px;width:4px;height:1px;background:#6a6a6a"></div>
<div style="position:absolute;left:51px;top:204px;width:6px;height:1px;background:#606060"></div>
<div style="position:absolute;left:53px;top:214px;width:4px;height:1px;background:#6a6a6a"></div>
<div style="position:absolute;left:41px;top:223px;width:16px;height:1px;background:#6c6c6c"></div>
<div class="t" style="left:42px;top:227px;font-size:10px;line-height:10px;color:#bcbcbc;text-align:center;width:10px">2</div>
<div style="position:absolute;left:53px;top:233px;width:4px;height:1px;background:#6a6a6a"></div>
<div style="position:absolute;left:51px;top:243px;width:6px;height:1px;background:#606060"></div>
<div style="position:absolute;left:53px;top:253px;width:4px;height:1px;background:#6a6a6a"></div>
<div style="position:absolute;left:41px;top:263px;width:16px;height:1px;background:#6c6c6c"></div>
<div class="t" style="left:42px;top:267px;font-size:10px;line-height:10px;color:#bcbcbc;text-align:center;width:10px">4</div>
<div style="position:absolute;left:53px;top:273px;width:4px;height:1px;background:#6a6a6a"></div>
<div style="position:absolute;left:51px;top:283px;width:6px;height:1px;background:#606060"></div>
<div style="position:absolute;left:53px;top:292px;width:4px;height:1px;background:#6a6a6a"></div>
<div style="position:absolute;left:41px;top:302px;width:16px;height:1px;background:#6c6c6c"></div>
<div class="t" style="left:42px;top:306px;font-size:10px;line-height:10px;color:#bcbcbc;text-align:center;width:10px">6</div>
<div style="position:absolute;left:53px;top:312px;width:4px;height:1px;background:#6a6a6a"></div>
<div style="position:absolute;left:51px;top:322px;width:6px;height:1px;background:#606060"></div>
<div style="position:absolute;left:53px;top:332px;width:4px;height:1px;background:#6a6a6a"></div>
<div style="position:absolute;left:41px;top:342px;width:16px;height:1px;background:#6c6c6c"></div>
<div class="t" style="left:42px;top:346px;font-size:10px;line-height:10px;color:#bcbcbc;text-align:center;width:10px">8</div>
<div style="position:absolute;left:53px;top:352px;width:4px;height:1px;background:#6a6a6a"></div>
<div style="position:absolute;left:51px;top:361px;width:6px;height:1px;background:#606060"></div>
<div style="position:absolute;left:53px;top:371px;width:4px;height:1px;background:#6a6a6a"></div>
<div style="position:absolute;left:41px;top:381px;width:16px;height:1px;background:#6c6c6c"></div>
<div class="t" style="left:42px;top:385px;font-size:10px;line-height:10px;color:#bcbcbc;text-align:center;width:10px">1<br>0</div>
<div style="position:absolute;left:53px;top:391px;width:4px;height:1px;background:#6a6a6a"></div>
<div style="position:absolute;left:51px;top:401px;width:6px;height:1px;background:#606060"></div>
<div style="position:absolute;left:53px;top:411px;width:4px;height:1px;background:#6a6a6a"></div>
<div style="position:absolute;left:41px;top:421px;width:16px;height:1px;background:#6c6c6c"></div>
<div class="t" style="left:42px;top:425px;font-size:10px;line-height:10px;color:#bcbcbc;text-align:center;width:10px">1<br>2</div>
<div style="position:absolute;left:53px;top:430px;width:4px;height:1px;background:#6a6a6a"></div>
<div style="position:absolute;left:51px;top:440px;width:6px;height:1px;background:#606060"></div>
<div style="position:absolute;left:53px;top:450px;width:4px;height:1px;background:#6a6a6a"></div>
<div style="position:absolute;left:41px;top:460px;width:16px;height:1px;background:#6c6c6c"></div>
<div class="t" style="left:42px;top:464px;font-size:10px;line-height:10px;color:#bcbcbc;text-align:center;width:10px">1<br>4</div>
<div style="position:absolute;left:53px;top:470px;width:4px;height:1px;background:#6a6a6a"></div>
<div style="position:absolute;left:51px;top:480px;width:6px;height:1px;background:#606060"></div>
<div style="position:absolute;left:53px;top:490px;width:4px;height:1px;background:#6a6a6a"></div>
<div style="position:absolute;left:41px;top:499px;width:16px;height:1px;background:#6c6c6c"></div>
<div class="t" style="left:42px;top:503px;font-size:10px;line-height:10px;color:#bcbcbc;text-align:center;width:10px">1<br>6</div>
<div style="position:absolute;left:53px;top:509px;width:4px;height:1px;background:#6a6a6a"></div>
<div style="position:absolute;left:51px;top:519px;width:6px;height:1px;background:#606060"></div>
<div style="position:absolute;left:53px;top:529px;width:4px;height:1px;background:#6a6a6a"></div>
<div style="position:absolute;left:41px;top:539px;width:16px;height:1px;background:#6c6c6c"></div>
<div class="t" style="left:42px;top:543px;font-size:10px;line-height:10px;color:#bcbcbc;text-align:center;width:10px">1<br>8</div>
<div style="position:absolute;left:53px;top:549px;width:4px;height:1px;background:#6a6a6a"></div>
<div style="position:absolute;left:51px;top:559px;width:6px;height:1px;background:#606060"></div>
<div style="position:absolute;left:53px;top:568px;width:4px;height:1px;background:#6a6a6a"></div>
<div style="position:absolute;left:41px;top:578px;width:16px;height:1px;background:#6c6c6c"></div>
<div class="t" style="left:42px;top:582px;font-size:10px;line-height:10px;color:#bcbcbc;text-align:center;width:10px">2<br>0</div>
<div style="position:absolute;left:53px;top:588px;width:4px;height:1px;background:#6a6a6a"></div>
<div style="position:absolute;left:51px;top:598px;width:6px;height:1px;background:#606060"></div>
<div style="position:absolute;left:53px;top:608px;width:4px;height:1px;background:#6a6a6a"></div>
<div style="position:absolute;left:41px;top:618px;width:16px;height:1px;background:#6c6c6c"></div>
<div class="t" style="left:42px;top:622px;font-size:10px;line-height:10px;color:#bcbcbc;text-align:center;width:10px">2<br>2</div>
<div style="position:absolute;left:53px;top:628px;width:4px;height:1px;background:#6a6a6a"></div>
<div style="position:absolute;left:51px;top:637px;width:6px;height:1px;background:#606060"></div>
<div style="position:absolute;left:53px;top:647px;width:4px;height:1px;background:#6a6a6a"></div>
<div style="position:absolute;left:41px;top:657px;width:16px;height:1px;background:#6c6c6c"></div>
<div class="t" style="left:42px;top:661px;font-size:10px;line-height:10px;color:#bcbcbc;text-align:center;width:10px">2<br>4</div>
<div style="position:absolute;left:53px;top:667px;width:4px;height:1px;background:#6a6a6a"></div>
<div style="position:absolute;left:51px;top:677px;width:6px;height:1px;background:#606060"></div>
<div style="position:absolute;left:53px;top:687px;width:4px;height:1px;background:#6a6a6a"></div>
<div style="position:absolute;left:41px;top:697px;width:16px;height:1px;background:#6c6c6c"></div>
<div class="t" style="left:42px;top:701px;font-size:10px;line-height:10px;color:#bcbcbc;text-align:center;width:10px">2<br>6</div>
<div style="position:absolute;left:53px;top:706px;width:4px;height:1px;background:#6a6a6a"></div>
<div style="position:absolute;left:51px;top:716px;width:6px;height:1px;background:#606060"></div>
<div style="position:absolute;left:53px;top:726px;width:4px;height:1px;background:#6a6a6a"></div>
<div style="position:absolute;left:41px;top:736px;width:16px;height:1px;background:#6c6c6c"></div>
<div class="t" style="left:42px;top:740px;font-size:10px;line-height:10px;color:#bcbcbc;text-align:center;width:10px">2<br>8</div>
<div style="position:absolute;left:53px;top:746px;width:4px;height:1px;background:#6a6a6a"></div>
<div style="position:absolute;left:51px;top:756px;width:6px;height:1px;background:#606060"></div>
<div style="position:absolute;left:53px;top:766px;width:4px;height:1px;background:#6a6a6a"></div>
<div style="position:absolute;left:41px;top:775px;width:16px;height:1px;background:#6c6c6c"></div>
<div class="t" style="left:42px;top:779px;font-size:10px;line-height:10px;color:#bcbcbc;text-align:center;width:10px">3<br>0</div>
<div style="position:absolute;left:53px;top:785px;width:4px;height:1px;background:#6a6a6a"></div>
<div style="position:absolute;left:51px;top:795px;width:6px;height:1px;background:#606060"></div>
<div style="position:absolute;left:53px;top:805px;width:4px;height:1px;background:#6a6a6a"></div>
<div style="position:absolute;left:41px;top:815px;width:16px;height:1px;background:#6c6c6c"></div>
<div class="t" style="left:42px;top:819px;font-size:10px;line-height:10px;color:#bcbcbc;text-align:center;width:10px">3<br>2</div>
<div style="position:absolute;left:53px;top:825px;width:4px;height:1px;background:#6a6a6a"></div>
<div style="position:absolute;left:51px;top:835px;width:6px;height:1px;background:#606060"></div>
<div style="position:absolute;left:53px;top:844px;width:4px;height:1px;background:#6a6a6a"></div>
<div style="position:absolute;left:889px;top:83px;width:1px;height:16px;background:repeating-linear-gradient(180deg,#cfcfcf 0 1px,transparent 1px 2px)"></div>
<div style="position:absolute;left:41px;top:610px;width:16px;height:1px;background:repeating-linear-gradient(90deg,#cfcfcf 0 1px,transparent 1px 2px)"></div>
<div style="position:absolute;left:58px;top:100px;width:1070px;height:753px;background:#1b1b1b"></div>
<div style="position:absolute;left:1128px;top:82px;width:19px;height:771px;background:linear-gradient(90deg,#1d1d1d,#282828)"></div>
<div style="position:absolute;left:386px;top:183px;width:416px;height:587px;background:#000"></div>
<div style="position:absolute;left:387px;top:184px;width:414px;height:585px;background:#fff"></div>
<div style="position:absolute;left:485px;top:377px;width:155px;height:94px;background:#000"></div>
<div style="position:absolute;left:41px;top:853px;width:1106px;height:16px;background:#262626;border-top:1px solid #1e1e1e"></div>
<div style="position:absolute;left:89px;top:853px;width:207px;height:16px;background:#2e2e2e"></div>
<div class="t" style="left:45px;top:857px;font-size:11px;color:#d8d8d8;letter-spacing:0.3px">16.67%</div>
<svg style="left:94px;top:855px" width="12" height="12" viewBox="0 0 12 12"><circle cx="6" cy="6" r="5.5" fill="#cfcfcf"/><path d="M4 3 V8.5 H9" fill="none" stroke="#2e2e2e" stroke-width="1.5"/></svg>
<div class="t" style="left:150px;top:857px;font-size:12px;color:#d8d8d8">文档<span style="font-size:11px;letter-spacing:0.5px">:24.9M/4.11M</span></div>
<svg style="left:286px;top:856px" width="7" height="10" viewBox="0 0 7 10"><path d="M0 0 L7 5 L0 10 Z" fill="#d0d0d0"/></svg>
<div style="position:absolute;left:1128px;top:853px;width:18px;height:16px;background:#333;border-top:1px solid #3c3c3c"></div>
<div style="position:absolute;left:1147px;top:63px;width:292px;height:806px;background:#2d2d2d"></div>
<div style="position:absolute;left:1147px;top:63px;width:2px;height:806px;background:#161616"></div>
<div style="position:absolute;left:1149px;top:75px;width:37px;height:794px;background:#353535"></div>
<div style="position:absolute;left:1186px;top:75px;width:2px;height:794px;background:#1a1a1a"></div>
<div style="position:absolute;left:1147px;top:63px;width:292px;height:12px;background:#202020;border-bottom:1px solid #151515"></div>
<svg style="left:1175px;top:67px" width="8" height="5" viewBox="0 0 8 5"><path d="M3.5 0 L0 2.5 L3.5 5 Z M7.5 0 L4 2.5 L7.5 5 Z" fill="#bdbdbd"/></svg>
<svg style="left:1428px;top:67px" width="8" height="5" viewBox="0 0 8 5"><path d="M0 0 L3.5 2.5 L0 5 Z M4 0 L7.5 2.5 L4 5 Z" fill="#bdbdbd"/></svg>
<div style="position:absolute;left:1149px;top:115px;width:37px;height:2px;background:#1e1e1e"></div>
<div style="position:absolute;left:1149px;top:184px;width:37px;height:2px;background:#1e1e1e"></div>
<div style="position:absolute;left:1158px;top:80px;width:1px;height:3px;background:#151515"></div>
<div style="position:absolute;left:1158px;top:120px;width:1px;height:3px;background:#151515"></div>
<div style="position:absolute;left:1160px;top:80px;width:1px;height:3px;background:#151515"></div>
<div style="position:absolute;left:1160px;top:120px;width:1px;height:3px;background:#151515"></div>
<div style="position:absolute;left:1162px;top:80px;width:1px;height:3px;background:#151515"></div>
<div style="position:absolute;left:1162px;top:120px;width:1px;height:3px;background:#151515"></div>
<div style="position:absolute;left:1164px;top:80px;width:1px;height:3px;background:#151515"></div>
<div style="position:absolute;left:1164px;top:120px;width:1px;height:3px;background:#151515"></div>
<div style="position:absolute;left:1166px;top:80px;width:1px;height:3px;background:#151515"></div>
<div style="position:absolute;left:1166px;top:120px;width:1px;height:3px;background:#151515"></div>
<div style="position:absolute;left:1168px;top:80px;width:1px;height:3px;background:#151515"></div>
<div style="position:absolute;left:1168px;top:120px;width:1px;height:3px;background:#151515"></div>
<div style="position:absolute;left:1170px;top:80px;width:1px;height:3px;background:#151515"></div>
<div style="position:absolute;left:1170px;top:120px;width:1px;height:3px;background:#151515"></div>
<div style="position:absolute;left:1172px;top:80px;width:1px;height:3px;background:#151515"></div>
<div style="position:absolute;left:1172px;top:120px;width:1px;height:3px;background:#151515"></div>
<div style="position:absolute;left:1174px;top:80px;width:1px;height:3px;background:#151515"></div>
<div style="position:absolute;left:1174px;top:120px;width:1px;height:3px;background:#151515"></div>
<div style="position:absolute;left:1176px;top:80px;width:1px;height:3px;background:#151515"></div>
<div style="position:absolute;left:1176px;top:120px;width:1px;height:3px;background:#151515"></div>
<svg style="left:1158px;top:89px" width="20" height="18" viewBox="0 0 20 18"><path d="M0.5 1.5 H2.5 M0.5 5 H2.5 M0.5 8.5 H2.5" stroke="#bdbdbd" stroke-width="1.8"/><path d="M4 1.5 H8 M4 5 H8" stroke="#c4c4c4" stroke-width="1.4"/><circle cx="11.5" cy="3.2" r="2.8" fill="#c4c4c4"/><rect x="10" y="4" width="3" height="5" fill="#c4c4c4"/><path d="M5 9.5 Q5 8.5 6 8.5 H17 Q18 8.5 18 9.5 V14 H5 Z" fill="#c4c4c4"/><rect x="5.5" y="15.5" width="12" height="1.3" fill="#c4c4c4"/></svg>
<svg style="left:1160px;top:130px" width="17" height="19" viewBox="0 0 17 19"><path d="M1.5 15.5 L6.5 2.5 L11.5 15.5 M3.5 11 H9.5" fill="none" stroke="#c4c4c4" stroke-width="1.9"/><rect x="14" y="0" width="1.2" height="18.5" fill="#c4c4c4"/></svg>
<svg style="left:1161px;top:160px" width="13" height="16" viewBox="0 0 13 16"><path d="M7 0.5 H12.5 V15.5 H11 V2 H9.5 V15.5 H8 V8 Q1 8.5 1 4.2 Q1 0.5 7 0.5 Z" fill="#c4c4c4"/></svg>
<div style="position:absolute;left:1188px;top:75px;width:251px;height:17px;background:#262626"></div>
<div style="position:absolute;left:1188px;top:92px;width:251px;height:250px;background:#333333"></div>
<div style="position:absolute;left:1189px;top:75px;width:38px;height:17px;background:#2a2a2a;border-right:1px solid #1e1e1e"></div>
<div class="t" style="left:1196px;top:78px;font-size:12px;color:#a8a8a8">调整</div>
<div style="position:absolute;left:1227px;top:75px;width:38px;height:17px;background:#2a2a2a;border-right:1px solid #1e1e1e"></div>
<div class="t" style="left:1234px;top:78px;font-size:12px;color:#a8a8a8">样式</div>
<div style="position:absolute;left:1265px;top:75px;width:38px;height:17px;background:#2a2a2a;border-right:1px solid #1e1e1e"></div>
<div class="t" style="left:1272px;top:78px;font-size:12px;color:#a8a8a8">属性</div>
<div style="position:absolute;left:1303px;top:75px;width:37px;height:17px;background:#333333"></div>
<div class="t" style="left:1310px;top:78px;font-size:12px;color:#dcdcdc">信息</div>
<svg style="left:1421px;top:80px" width="15" height="7" viewBox="0 0 15 7"><path d="M0 2 H5 L2.5 5 Z" fill="#cfcfcf"/><path d="M6 0.5 H14 M6 3 H14 M6 5.5 H14" stroke="#cfcfcf" stroke-width="1.2"/></svg>
<div style="position:absolute;left:1313px;top:92px;width:1px;height:87px;background:#262626"></div>
<div style="position:absolute;left:1314px;top:92px;width:1px;height:87px;background:#3a3a3a"></div>
<div style="position:absolute;left:1188px;top:178px;width:251px;height:1px;background:#262626"></div>
<div style="position:absolute;left:1188px;top:179px;width:251px;height:1px;background:#3a3a3a"></div>
<div style="position:absolute;left:1313px;top:180px;width:1px;height:33px;background:#262626"></div>
<div style="position:absolute;left:1314px;top:180px;width:1px;height:33px;background:#3a3a3a"></div>
<div style="position:absolute;left:1188px;top:213px;width:251px;height:1px;background:#262626"></div>
<div style="position:absolute;left:1188px;top:214px;width:251px;height:1px;background:#3a3a3a"></div>
<div style="position:absolute;left:1188px;top:243px;width:251px;height:1px;background:#262626"></div>
<div style="position:absolute;left:1188px;top:244px;width:251px;height:1px;background:#3a3a3a"></div>
<svg style="left:1197px;top:113px" width="15" height="14" viewBox="0 0 15 14"><path d="M1.5 12.5 L8 6 L9.5 7.5 L3 14 Z" fill="none" stroke="#d0d0d0" stroke-width="1.2"/><path d="M7 5 L10.5 8.5 L12 7 L8.5 3.5 Z" fill="#d0d0d0"/><circle cx="11" cy="3.5" r="2.4" fill="#d0d0d0"/><path d="M9 11 H14 L11.5 13.5 Z" fill="#d0d0d0"/></svg>
<svg style="left:1321px;top:113px" width="15" height="14" viewBox="0 0 15 14"><path d="M1.5 12.5 L8 6 L9.5 7.5 L3 14 Z" fill="none" stroke="#d0d0d0" stroke-width="1.2"/><path d="M7 5 L10.5 8.5 L12 7 L8.5 3.5 Z" fill="#d0d0d0"/><circle cx="11" cy="3.5" r="2.4" fill="#d0d0d0"/><path d="M9 11 H14 L11.5 13.5 Z" fill="#d0d0d0"/></svg>
<div class="t" style="left:1222px;top:100px;font-size:11px;color:#d0d0d0">R<span style="margin-left:5px;font-weight:bold">:</span></div>
<div class="t" style="left:1222px;top:114px;font-size:11px;color:#d0d0d0">G<span style="margin-left:5px;font-weight:bold">:</span></div>
<div class="t" style="left:1222px;top:128px;font-size:11px;color:#d0d0d0">B<span style="margin-left:5px;font-weight:bold">:</span></div>
<div class="t" style="left:1217px;top:154px;font-size:12px;color:#d0d0d0"><span style="font-size:11px;letter-spacing:0px">8 </span>位</div>
<div class="t" style="left:1346px;top:100px;font-size:11px;color:#d0d0d0">C<span style="margin-left:5px;font-weight:bold">:</span></div>
<div class="t" style="left:1346px;top:114px;font-size:11px;color:#d0d0d0">M<span style="margin-left:5px;font-weight:bold">:</span></div>
<div class="t" style="left:1346px;top:128px;font-size:11px;color:#d0d0d0">Y<span style="margin-left:5px;font-weight:bold">:</span></div>
<div class="t" style="left:1346px;top:142px;font-size:11px;color:#d0d0d0">K<span style="margin-left:5px;font-weight:bold">:</span></div>
<div class="t" style="left:1341px;top:154px;font-size:12px;color:#d0d0d0"><span style="font-size:11px;letter-spacing:0px">8 </span>位</div>
<svg style="left:1196px;top:190px" width="16" height="16" viewBox="0 0 16 16"><path d="M7.5 0 V15 M0 7.5 H15" stroke="#d0d0d0" stroke-width="1"/><path d="M10 12 H15 L12.5 14.5 Z" fill="#d0d0d0"/></svg>
<div class="t" style="left:1222px;top:184px;font-size:11px;color:#d0d0d0">X<span style="margin-left:5px;font-weight:bold">:</span></div>
<div class="t" style="left:1222px;top:198px;font-size:11px;color:#d0d0d0">Y<span style="margin-left:5px;font-weight:bold">:</span></div>
<svg style="left:1319px;top:189px" width="17" height="17" viewBox="0 0 17 17"><path d="M3.5 4 V15 M0.5 12.5 L3.5 15.5 L6.5 12.5" fill="none" stroke="#d0d0d0" stroke-width="1.2"/><path d="M3 3.5 H13.5 M11 1 L13.5 3.5 L11 6" fill="none" stroke="#d0d0d0" stroke-width="1.2"/><path d="M14.5 6 V14.5 H6" fill="none" stroke="#d0d0d0" stroke-width="1" stroke-dasharray="1 1"/></svg>
<div class="t" style="left:1343px;top:184px;font-size:11px;color:#d0d0d0">W<span style="margin-left:4px;font-weight:bold">:</span></div>
<div class="t" style="left:1345px;top:198px;font-size:11px;color:#d0d0d0">H<span style="margin-left:5px;font-weight:bold">:</span></div>
<div class="t" style="left:1201px;top:223px;font-size:12px;color:#d0d0d0">文档<span style="font-size:11px;letter-spacing:0px"> :24.9M/4.11M</span></div>
<div class="t" style="left:1201px;top:252px;font-size:12px;color:#d0d0d0">点按并拖移以移动图层或移动选区的拷</div>
<div class="t" style="left:1201px;top:266px;font-size:12px;color:#d0d0d0">贝。使用<span style="font-size:11px;letter-spacing:0.2px"> Shift </span>键限制沿<span style="font-size:11px;letter-spacing:0.2px"> 45 </span>度增量方向。</div>
<div style="position:absolute;left:1188px;top:342px;width:251px;height:3px;background:#1c1c1c"></div>
<div style="position:absolute;left:1188px;top:345px;width:251px;height:16px;background:#262626"></div>
<div style="position:absolute;left:1188px;top:361px;width:251px;height:508px;background:#333333"></div>
<div style="position:absolute;left:1189px;top:345px;width:37px;height:16px;background:#333333"></div>
<div class="t" style="left:1196px;top:347px;font-size:12px;color:#dcdcdc">图层</div>
<div style="position:absolute;left:1226px;top:345px;width:38px;height:16px;background:#2a2a2a;border-right:1px solid #1e1e1e"></div>
<div class="t" style="left:1233px;top:347px;font-size:12px;color:#a8a8a8">通道</div>
<div style="position:absolute;left:1264px;top:345px;width:38px;height:16px;background:#2a2a2a;border-right:1px solid #1e1e1e"></div>
<div class="t" style="left:1271px;top:347px;font-size:12px;color:#a8a8a8">路径</div>
<div style="position:absolute;left:1302px;top:345px;width:63px;height:16px;background:#2a2a2a;border-right:1px solid #1e1e1e"></div>
<div class="t" style="left:1309px;top:347px;font-size:12px;color:#a8a8a8">历史记录</div>
<svg style="left:1421px;top:350px" width="15" height="7" viewBox="0 0 15 7"><path d="M0 2 H5 L2.5 5 Z" fill="#cfcfcf"/><path d="M6 0.5 H14 M6 3 H14 M6 5.5 H14" stroke="#cfcfcf" stroke-width="1.2"/></svg>
<div style="position:absolute;left:1194px;top:366px;width:69px;height:20px;background:linear-gradient(#444,#383838);border:1px solid #1e1e1e;border-radius:3px;box-shadow:inset 0 1px 0 #4c4c4c"></div>
<div class="t" style="left:1215px;top:370px;font-size:12px;color:#d8d8d8">类型</div>
<svg style="left:1253px;top:371px" width="6" height="10" viewBox="0 0 6 10"><path d="M0 4 H6 L3 0.5 Z M0 6 H6 L3 9.5 Z" fill="#c8c8c8"/></svg>
<svg style="left:1199px;top:371px" width="10" height="11" viewBox="0 0 10 11"><circle cx="5.5" cy="4.5" r="3.6" fill="none" stroke="#cfcfcf" stroke-width="1.3"/><path d="M3 7 L0.8 10" stroke="#cfcfcf" stroke-width="1.6"/></svg>
<svg style="left:1283px;top:369px" width="13" height="12" viewBox="0 0 13 12"><rect x="0.5" y="0.5" width="12" height="11" fill="none" stroke="#c0c0c0"/><path d="M1.5 10.5 L5 6 L7.5 8.5 L9 7 L11.5 10.5 Z" fill="#c0c0c0"/><circle cx="9" cy="3.5" r="1" fill="#c0c0c0"/></svg>
<svg style="left:1307px;top:369px" width="12" height="12" viewBox="0 0 12 12"><circle cx="6" cy="6" r="5.5" fill="#c0c0c0"/><path d="M2.5 9.5 L9.5 2.5" stroke="#333" stroke-width="1.6"/><path d="M3 9 A4.5 4.5 0 0 1 9 3 Z" fill="#555"/></svg>
<div class="t" style="left:1330px;top:366px;font-family:Liberation Serif,serif;font-size:17px;font-weight:bold;color:#c0c0c0;line-height:17px">T</div>
<svg style="left:1355px;top:369px" width="13" height="13" viewBox="0 0 13 13"><rect x="2" y="2" width="9" height="9" fill="none" stroke="#c0c0c0" stroke-width="1.2"/><rect x="0.5" y="0.5" width="3" height="3" fill="#c0c0c0"/><rect x="9.5" y="0.5" width="3" height="3" fill="#c0c0c0"/><rect x="0.5" y="9.5" width="3" height="3" fill="#c0c0c0"/><rect x="9.5" y="9.5" width="3" height="3" fill="#c0c0c0"/></svg>
<svg style="left:1379px;top:368px" width="12" height="14" viewBox="0 0 12 14"><path d="M4.5 0.5 H9 L11.5 3 V11 H4.5 Z" fill="none" stroke="#c0c0c0"/><rect x="0.5" y="6" width="6" height="7.5" fill="#c0c0c0"/></svg>
<div style="position:absolute;left:1414px;top:367px;width:9px;height:17px;background:#1e1e1e;border-radius:1px"></div>
<div style="position:absolute;left:1415px;top:368px;width:7px;height:7px;background:linear-gradient(#9a9a9a,#6a6a6a)"></div>
<div style="position:absolute;left:1188px;top:389px;width:251px;height:1px;background:#282828"></div>
<div style="position:absolute;left:1188px;top:390px;width:251px;height:1px;background:#3a3a3a"></div>
<div style="position:absolute;left:1194px;top:394px;width:109px;height:19px;background:linear-gradient(#444,#383838);border:1px solid #1e1e1e;border-radius:3px;box-shadow:inset 0 1px 0 #4c4c4c"></div>
<div class="t" style="left:1202px;top:398px;font-size:12px;color:#d8d8d8">正常</div>
<svg style="left:1293px;top:398px" width="6" height="10" viewBox="0 0 6 10"><path d="M0 4 H6 L3 0.5 Z M0 6 H6 L3 9.5 Z" fill="#c8c8c8"/></svg>
<div class="t" style="left:1312px;top:397px;font-size:12px;color:#d8d8d8">不透明度:</div>
<div style="position:absolute;left:1369px;top:394px;width:34px;height:20px;background:#1c1c1c;border:1px solid #1a1a1a"></div>
<div class="t" style="left:1370px;top:398px;font-size:12px;color:#e8e8e8">100%</div>
<div style="position:absolute;left:1403px;top:394px;width:19px;height:20px;background:linear-gradient(#444,#3a3a3a);border:1px solid #1e1e1e;border-radius:0 2px 2px 0"></div>
<svg style="left:1409px;top:402px" width="6" height="4" viewBox="0 0 6 4"><path d="M0 0 H6 L3 3.5 Z" fill="#cfcfcf"/></svg>
<div style="position:absolute;left:1188px;top:417px;width:251px;height:1px;background:#282828"></div>
<div style="position:absolute;left:1188px;top:418px;width:251px;height:1px;background:#3a3a3a"></div>
<div class="t" style="left:1196px;top:425px;font-size:12px;color:#d8d8d8">锁定:</div>
<svg style="left:1233px;top:426px" width="12" height="12" viewBox="0 0 12 12"><rect x="0" y="0" width="12" height="12" fill="#c8c8c8"/><path d="M1 1 h3.3v3.3h-3.3z M7.7 1 h3.3v3.3h-3.3z M4.3 4.3 h3.4v3.4h-3.4z M1 7.7 h3.3v3.3h-3.3z M7.7 7.7 h3.3v3.3h-3.3z" fill="#555"/></svg>
<svg style="left:1252px;top:424px" width="18" height="15" viewBox="0 0 18 15"><path d="M16.5 1 L9.5 8.5" stroke="#c8c8c8" stroke-width="1.8" stroke-linecap="round"/><path d="M0 14 Q2.5 13.5 3.5 10.5 Q5.5 7.5 8.5 8 Q11 9.5 9.5 12 Q7 15 0 14 Z" fill="#e2caca"/></svg>
<svg style="left:1276px;top:424px" width="14" height="15" viewBox="0 0 14 15"><path d="M7 1 V14 M0.5 7.5 H13.5" stroke="#c8c8c8" stroke-width="1.2"/><path d="M7 0 L4.5 3 H9.5 Z M7 15 L4.5 12 H9.5 Z M0 7.5 L3 5 V10 Z M14 7.5 L11 5 V10 Z" fill="#c8c8c8"/></svg>
<svg style="left:1299px;top:425px" width="12" height="14" viewBox="0 0 12 14"><path d="M3 6 V4.2 A3 3 0 0 1 9 4.2 V6" fill="none" stroke="#bdbdbd" stroke-width="1.5"/><rect x="0.5" y="6" width="11" height="7.5" fill="#cfa9a9"/><rect x="5" y="8.5" width="2" height="2.5" fill="#5a4a4a"/></svg>
<div class="t" style="left:1336px;top:425px;font-size:12px;color:#d8d8d8">填充:</div>
<div style="position:absolute;left:1369px;top:422px;width:34px;height:20px;background:#1c1c1c;border:1px solid #1a1a1a"></div>
<div class="t" style="left:1370px;top:426px;font-size:12px;color:#e8e8e8">100%</div>
<div style="position:absolute;left:1403px;top:422px;width:19px;height:20px;background:linear-gradient(#444,#3a3a3a);border:1px solid #1e1e1e;border-radius:0 2px 2px 0"></div>
<svg style="left:1409px;top:430px" width="6" height="4" viewBox="0 0 6 4"><path d="M0 0 H6 L3 3.5 Z" fill="#cfcfcf"/></svg>
<div style="position:absolute;left:1188px;top:444px;width:251px;height:1px;background:#282828"></div>
<div style="position:absolute;left:1188px;top:445px;width:251px;height:1px;background:#3a3a3a"></div>
<div style="position:absolute;left:1188px;top:446px;width:236px;height:405px;background:#2b2b2b"></div>
<div style="position:absolute;left:1424px;top:446px;width:15px;height:405px;background:#2f2f2f"></div>
<div style="position:absolute;left:1188px;top:447px;width:236px;height:39px;background:#303030"></div>
<div style="position:absolute;left:1219px;top:447px;width:205px;height:39px;background:#4b5265"></div>
<div style="position:absolute;left:1188px;top:486px;width:236px;height:1px;background:#1f1f1f"></div>
<div style="position:absolute;left:1188px;top:487px;width:236px;height:39px;background:#323232"></div>
<div style="position:absolute;left:1188px;top:526px;width:236px;height:1px;background:#222"></div>
<div style="position:absolute;left:1218px;top:447px;width:1px;height:79px;background:#262626"></div>
<svg style="left:1197px;top:463px" width="14" height="9" viewBox="0 0 14 9"><path d="M0.5 4.5 Q7 -2 13.5 4.5 Q7 11 0.5 4.5 Z" fill="#a8a8a8"/><circle cx="7" cy="4.5" r="2.6" fill="#3a3a3a"/><circle cx="7" cy="4.5" r="1.2" fill="#a8a8a8"/></svg>
<svg style="left:1197px;top:502px" width="14" height="9" viewBox="0 0 14 9"><path d="M0.5 4.5 Q7 -2 13.5 4.5 Q7 11 0.5 4.5 Z" fill="#a8a8a8"/><circle cx="7" cy="4.5" r="2.6" fill="#3a3a3a"/><circle cx="7" cy="4.5" r="1.2" fill="#a8a8a8"/></svg>
<div style="position:absolute;left:1224px;top:451px;width:23px;height:31px;background-color:#fff;background-image:linear-gradient(45deg,#ccc 25%,transparent 25%,transparent 75%,#ccc 75%),linear-gradient(45deg,#ccc 25%,transparent 25%,transparent 75%,#ccc 75%);background-size:8px 8px;background-position:0 0,4px 4px"></div>
<div style="position:absolute;left:1229px;top:462px;width:8px;height:5px;background:#000"></div>
<svg style="left:1221px;top:448px" width="29" height="37" viewBox="0 0 29 37"><path d="M0.5 6 V0.5 H6 M22 0.5 H27.5 V6 M27.5 30 V35.5 H22 M6 35.5 H0.5 V30" fill="none" stroke="#fff" stroke-width="1.4"/></svg>
<div class="t" style="left:1257px;top:461px;font-size:12px;color:#e0e0e0">图层 1</div>
<div style="position:absolute;left:1223px;top:490px;width:24px;height:32px;background:#fff;border:1px solid #1a1a1a"></div>
<div class="t" style="left:1259px;top:500px;font-size:12px;color:#e0e0e0;font-style:italic">背景</div>
<svg style="left:1397px;top:499px" width="11" height="13" viewBox="0 0 11 13"><path d="M2.5 6 V4 A3 3 0 0 1 8.5 4 V6" fill="none" stroke="#bdbdbd" stroke-width="1.2"/><rect x="1" y="6" width="9" height="6.5" fill="none" stroke="#bdbdbd"/><rect x="5" y="8.5" width="1" height="2" fill="#bdbdbd"/></svg>
<svg style="left:0;top:0" width="1439" height="869"><ellipse cx="1310.5" cy="464.5" rx="127.5" ry="30.5" fill="none" stroke="#9e2a30" stroke-width="1.6"/></svg>
<div style="position:absolute;left:1188px;top:851px;width:251px;height:18px;background:#353535;border-top:1px solid #262626"></div>
<svg style="left:1235px;top:855px" width="15" height="9" viewBox="0 0 15 9"><path d="M5.5 1 H3.8 A3.2 3.2 0 0 0 3.8 7.5 H5.5 M9.5 1 H11.2 A3.2 3.2 0 0 1 11.2 7.5 H9.5 M4.5 4.25 H10.5" fill="none" stroke="#b2b2b2" stroke-width="1.6"/></svg>
<div class="t" style="left:1263px;top:852px;font-family:Liberation Serif,serif;font-size:15px;font-weight:bold;color:#c4c4c4"><i>fx</i></div>
<svg style="left:1276px;top:863px" width="4" height="3" viewBox="0 0 4 3"><path d="M0 0 H4 L2 2.5 Z" fill="#b2b2b2"/></svg>
<svg style="left:1290px;top:855px" width="14" height="11" viewBox="0 0 14 11"><rect x="0" y="0" width="14" height="11" fill="#b2b2b2"/><circle cx="7" cy="5.5" r="2.8" fill="#353535"/></svg>
<svg style="left:1317px;top:854px" width="14" height="13" viewBox="0 0 14 13"><circle cx="6" cy="6" r="5.5" fill="#b2b2b2"/><path d="M2.5 9.5 L9.5 2.5" stroke="#353535" stroke-width="1.5"/><path d="M11 11 H14 L12.5 13 Z" fill="#b2b2b2"/></svg>
<svg style="left:1344px;top:854px" width="14" height="12" viewBox="0 0 14 12"><path d="M0 1 H5 L6.5 2.5 H14 V12 H0 Z" fill="#b2b2b2"/></svg>
<svg style="left:1371px;top:854px" width="13" height="13" viewBox="0 0 13 13"><rect x="3" y="0" width="10" height="12" fill="#b2b2b2"/><path d="M0 7 H6 V13 Z" fill="#353535"/><path d="M1 8 L5 12" stroke="#b2b2b2" stroke-width="1.2"/></svg>
<svg style="left:1398px;top:853px" width="13" height="14" viewBox="0 0 13 14"><path d="M0.5 2.5 H12.5 M4.5 2.5 V0.5 H8.5 V2.5" fill="none" stroke="#b2b2b2" stroke-width="1.2"/><path d="M2 4 H11 L10 13.5 H3 Z" fill="none" stroke="#b2b2b2" stroke-width="1.2"/><path d="M5 5 V12 M6.5 5 V12 M8 5 V12" stroke="#b2b2b2" stroke-width="0.8"/></svg></body></html>
